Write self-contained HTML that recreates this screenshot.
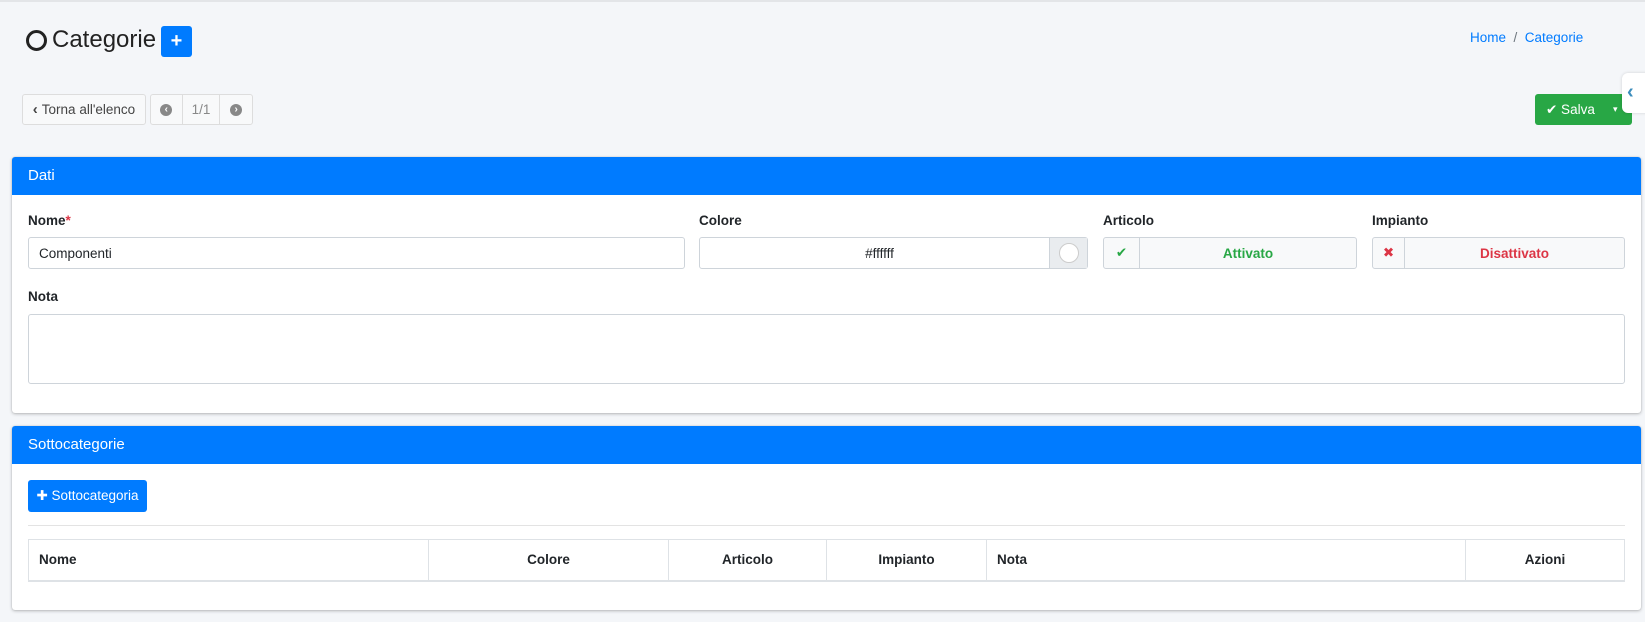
<!DOCTYPE html>
<html><head><meta charset="utf-8"><style>
*{box-sizing:border-box;margin:0;padding:0}
body{width:1645px;height:622px;background:#f4f6f9;font-family:"Liberation Sans",sans-serif;font-size:14px;color:#212529;position:relative;overflow:hidden}
.abs{position:absolute}
.btn{position:absolute;border:1px solid #ddd;background:#f8f9fa;border-radius:3px;color:#444;font-size:13.5px;display:flex;align-items:center;justify-content:center}
.card{position:absolute;left:12px;width:1629px;background:#fff;box-shadow:0 0 1px rgba(0,0,0,.2),0 1px 3px rgba(0,0,0,.25);border-radius:3px}
.ch{background:#007bff;color:#fff;height:38px;line-height:38px;padding-left:16px;font-size:15px;border-radius:3px 3px 0 0}
.lbl{position:absolute;font-weight:bold;font-size:13.5px}
.inp{position:absolute;border:1px solid #ced4da;border-radius:3px;height:32px;font-size:13.5px;display:flex;align-items:center}
table{position:absolute;border-collapse:collapse;font-size:13.5px;font-weight:bold}
td{border:1px solid #dee2e6;border-bottom:2px solid #dee2e6;height:41px;padding:0 10px}
.ci{display:inline-block;width:12px;height:12px;border-radius:50%;background:#888;color:#fff;font-size:10px;line-height:12px;text-align:center;font-weight:bold;vertical-align:middle}
</style></head><body>
<div class="abs" style="left:0;top:0;width:1645px;height:2px;background:#e3e5e8"></div>
<div class="abs" style="left:26px;top:30px;width:21px;height:21px;border:3.5px solid #222;border-radius:50%"></div>
<div class="abs" style="left:52px;top:26px;font-size:24px;color:#222">Categorie</div>
<div class="abs" style="left:161px;top:26px;width:31px;height:31px;background:#007bff;border-radius:3px;color:#fff;font-weight:bold;font-size:20px;text-align:center;line-height:30px">+</div>
<div class="abs" style="left:1470px;top:30px;font-size:13.5px;color:#007bff">Home <span style="color:#6c757d">&nbsp;/&nbsp;</span> Categorie</div>
<div class="btn" style="left:22px;top:94px;width:124px;height:31px"><b style="font-size:15px;margin-right:4px">‹</b>Torna all'elenco</div>
<div class="btn" style="left:150px;top:94px;width:103px;height:31px;justify-content:flex-start;color:#888">
<span style="width:32px;text-align:center;border-right:1px solid #ddd;height:100%;line-height:29px"><span class="ci">‹</span></span><span style="width:38px;text-align:center;border-right:1px solid #ddd;height:100%;line-height:29px">1/1</span><span style="width:32px;text-align:center;line-height:29px"><span class="ci">›</span></span></div>
<div class="abs" style="left:1535px;top:94px;width:97px;height:31px;background:#28a745;border-radius:3px;color:#fff;font-size:13.5px;line-height:31px;padding-left:11px">✔ Salva<span style="position:absolute;left:78px;font-size:9px">▾</span></div>
<div class="abs" style="left:1622px;top:73px;width:30px;height:40px;background:#fff;border-radius:6px 0 0 6px;box-shadow:0 0 3px rgba(0,0,0,.15);color:#3c8dbc;font-weight:bold;font-size:20px;padding-left:5px;line-height:38px">‹</div>

<div class="card" style="top:157px;height:256px">
<div class="ch">Dati</div>
</div>
<div class="lbl" style="left:28px;top:213px">Nome<span style="color:#dc3545">*</span></div>
<div class="inp" style="left:28px;top:237px;width:657px;padding-left:10px">Componenti</div>
<div class="lbl" style="left:699px;top:213px">Colore</div>
<div class="inp" style="left:699px;top:237px;width:389px"><span style="flex:1;text-align:center;padding-left:10px">#ffffff</span><span style="width:38px;height:100%;background:#e9ecef;border-left:1px solid #ced4da;display:flex;align-items:center;justify-content:center"><span style="width:20px;height:20px;border-radius:50%;background:#fff;border:1px solid #ccc"></span></span></div>
<div class="lbl" style="left:1103px;top:213px">Articolo</div>
<div class="inp" style="left:1103px;top:237px;width:254px;background:#f8f9fa"><span style="width:36px;text-align:center;border-right:1px solid #ced4da;height:100%;line-height:30px;color:#28a745">✔</span><b style="flex:1;text-align:center;color:#28a745">Attivato</b></div>
<div class="lbl" style="left:1372px;top:213px">Impianto</div>
<div class="inp" style="left:1372px;top:237px;width:253px;background:#f8f9fa"><span style="width:32px;text-align:center;border-right:1px solid #ced4da;height:100%;line-height:30px;color:#dc3545">✖</span><b style="flex:1;text-align:center;color:#dc3545">Disattivato</b></div>
<div class="lbl" style="left:28px;top:289px">Nota</div>
<div class="inp" style="left:28px;top:314px;width:1597px;height:70px"></div>

<div class="card" style="top:426px;height:184px">
<div class="ch">Sottocategorie</div>
</div>
<div class="abs" style="left:28px;top:480px;width:119px;height:32px;background:#007bff;border-radius:3px;color:#fff;font-size:13.5px;line-height:32px;text-align:center">✚ Sottocategoria</div>
<div class="abs" style="left:28px;top:525px;width:1597px;border-top:1px solid #e3e3e3"></div>
<table style="left:28px;top:539px;width:1597px">
<tr><td style="width:400px">Nome</td><td style="width:240px;text-align:center">Colore</td><td style="width:158px;text-align:center">Articolo</td><td style="width:160px;text-align:center">Impianto</td><td style="width:479px">Nota</td><td style="text-align:center">Azioni</td></tr>
</table>
</body></html>
